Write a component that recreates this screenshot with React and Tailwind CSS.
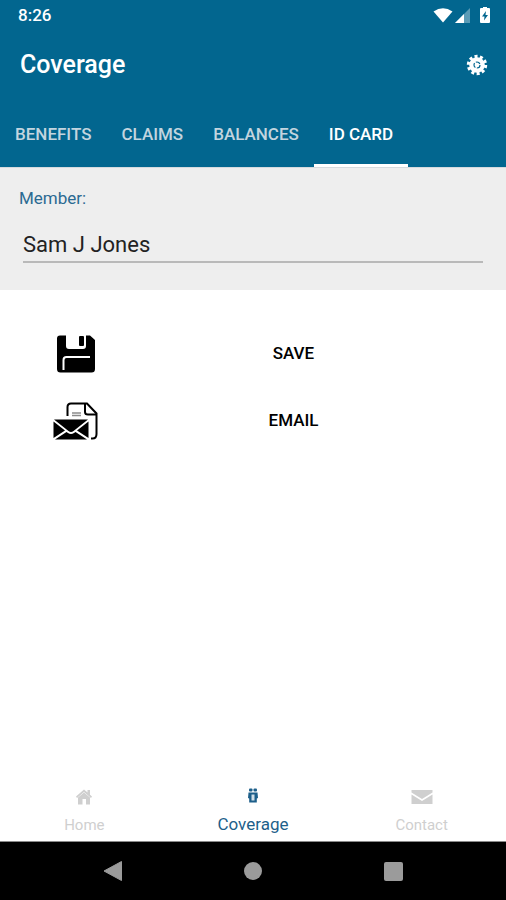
import React from 'react';

const tabs = ['BENEFITS', 'CLAIMS', 'BALANCES', 'ID CARD'];

const StatusIcons = () => (
  <svg className="w-[58px] h-5" viewBox="0 0 58 20" fill="white" aria-hidden="true">
    {/* Wifi */}
    <path d="M0.500 5.500 Q10 -1 19.500 5.500 L10 16.500 Z" />
    {/* Signal */}
    <path d="M37 2 V17 H22 Z" opacity="0.35" />
    <path d="M31 8 V17 H22 Z" />
    {/* Battery */}
    <path d="M48 2 H50 V1 H54 V2 H56 Q57 2 57 3 V16 Q57 17 56 17 H48 Q47 17 47 16 V3 Q47 2 48 2 Z" />
    <path d="M53 5 L49 10.500 H51.500 L51 14.500 L55 9 H52.500 Z" fill="#02668f" />
  </svg>
);

const GearIcon = () => (
  <svg className="size-[22px]" viewBox="0 0 22 22" aria-hidden="true">
    <circle cx="11" cy="11" r="8.500" fill="none" stroke="white" strokeWidth="3.400" strokeDasharray="2.940 2.400" />
    <circle cx="11" cy="11" r="7.800" fill="white" />
    <circle cx="11" cy="11" r="3" fill="none" stroke="#02668f" strokeWidth="1.200" strokeDasharray="4.800 1.480" />
  </svg>
);

const SaveIcon = () => (
  <svg className="w-[38px] h-[38px]" viewBox="0 0 38 38" aria-hidden="true">
    <path d="M3 0.500 H9 V11 Q9 14 12 14 H26 Q29 14 29 11 V0.500 H33 L38 5 V34 Q38 37.500 34.500 37.500 H3.500 Q0 37.500 0 34 V3.500 Q0 0.500 3 0.500 Z" />
    <rect x="22" y="1" width="5" height="10" rx="1" />
    <path d="M6.500 35 V25 Q6.500 22 9.500 22 H33" fill="none" stroke="white" strokeWidth="2" />
  </svg>
);

const EmailIcon = () => (
  <svg className="w-[46px] h-[38px]" viewBox="0 0 46 38" aria-hidden="true">
    <path d="M14.500 14 V5 Q14.500 1.500 18 1.500 H34 L43.500 11.500 V32 Q43.500 36.500 39.500 36.500 H38" fill="none" stroke="black" strokeWidth="2" />
    <path d="M32 2 V10 Q32 12.500 35 12.500 H43" fill="none" stroke="black" strokeWidth="2" />
    <path d="M19 11 H28 M19 13.500 H28" stroke="#8c8c8c" strokeWidth="1.500" />
    <path d="M1 17.500 H35 L20.500 29 Q18 31 15.500 29 Z" />
    <path d="M0.500 19.500 L12 28.500 L0.500 36 Z M35.500 19.500 L24 28.500 L35.500 36 Z" />
    <path d="M2 37.500 L13.500 30 L15 31 Q18 33 21 31 L22.500 30 L34 37.500 Z" />
  </svg>
);

const HomeIcon = () => (
  <svg className="w-4 h-4" viewBox="0 0 16 16" fill="currentColor" aria-hidden="true">
    <path d="M0 7.500 L8 0.500 L11.500 3.500 V1 H14 V5.800 L16 7.500 L15 9 L8 3 L1 9 Z" />
    <path d="M2 8.500 L8 3.500 L14 8.500 V15.500 H10 V10 H6.500 V15.500 H2 Z" />
  </svg>
);

const CoverageIcon = () => (
  <svg className="w-4 h-4" viewBox="0 0 16 16" fill="currentColor" aria-hidden="true">
    <rect x="4" y="0.500" width="3.500" height="3" rx="1" />
    <rect x="8.500" y="0.500" width="3.500" height="3" rx="1" />
    <path d="M3.500 4.500 H12.500 L13 10 L11.800 10.500 V14.500 H4.200 V10.500 L3 10 Z" />
    <path d="M6.500 6.500 H9.500 V12.500 H6.500 Z" fill="white" opacity="0.800" />
  </svg>
);

const MailIcon = () => (
  <svg className="w-[22px] h-4" viewBox="0 0 22 16" fill="currentColor" aria-hidden="true">
    <path d="M0.500 1 H21.500 V3.500 L11 10 L0.500 3.500 Z" />
    <path d="M0.500 5.500 L11 12 L21.500 5.500 V15 H0.500 Z" />
  </svg>
);

const ActionRow = ({ icon, label }) => (
  <button type="button" className="flex items-center w-full h-[67px] text-[17px] font-medium text-black">
    <span className="w-[30%] flex justify-center">{icon}</span>
    <span className="w-[56%] text-center">{label}</span>
  </button>
);

const App = () => {
  return (
    <div className="min-h-screen flex flex-col bg-white font-[Roboto,sans-serif]">
      <header className="bg-[#02668f] text-white">
        {/* Status bar */}
        <div className="flex items-center justify-between h-8 pl-[18px] pr-[15px]">
          <span className="text-[17px] font-medium">8:26</span>
          <StatusIcons />
        </div>

        {/* Title bar */}
        <div className="flex items-center justify-between h-[66px] pl-5 pr-[18px]">
          <h1 className="text-[25px] font-medium">Coverage</h1>
          <button type="button" aria-label="Settings">
            <GearIcon />
          </button>
        </div>

        {/* Tabs */}
        <nav className="flex h-[69px]" role="tablist">
          {tabs.map((tab) => (
            <button
              key={tab}
              type="button"
              role="tab"
              aria-selected={tab === 'ID CARD'}
              className={`px-[15px] pt-2 border-b-3 text-[17px] font-medium ${
                tab === 'ID CARD' ? 'border-white text-white' : 'border-transparent text-[#c3d5df]'
              }`}
            >
              {tab}
            </button>
          ))}
        </nav>
      </header>

      {/* Member */}
      <section className="h-[123px] px-[19px] pt-[18px] bg-[#eeeeee] border-t border-[#d5dade]">
        <label htmlFor="member" className="block h-6 leading-6 text-[17px] text-[#2b6a92]">
          Member:
        </label>
        <div className="px-1 pt-[17px]">
          <input
            id="member"
            type="text"
            defaultValue="Sam J Jones"
            className="block w-full h-9 border-b-2 border-[#b9b9b9] bg-transparent text-[22px] text-[#222222] outline-none"
          />
        </div>
      </section>

      {/* Card actions */}
      <main className="flex-1 pt-[30px]">
        <ActionRow icon={<SaveIcon />} label="SAVE" />
        <ActionRow icon={<EmailIcon />} label="EMAIL" />
      </main>

      {/* Bottom navigation */}
      <nav className="grid grid-cols-3 h-[66px] border-b border-[#8a8a8a] text-center text-[#cfcfcf]">
        <a href="#home" className="flex flex-col items-center pt-[13px] gap-[10px]">
          <HomeIcon />
          <span className="text-[15px] leading-5">Home</span>
        </a>
        <a href="#coverage" className="flex flex-col items-center pt-3 gap-2 text-[#1d5f8a]">
          <CoverageIcon />
          <span className="text-[17px] leading-6">Coverage</span>
        </a>
        <a href="#contact" className="flex flex-col items-center pt-[13px] gap-[10px]">
          <MailIcon />
          <span className="text-[15px] leading-5">Contact</span>
        </a>
      </nav>

      {/* System buttons */}
      <div className="flex items-center justify-center h-[58px] bg-black">
        <button type="button" aria-label="Back" className="w-[140px] flex justify-center">
          <svg className="size-5" viewBox="0 0 20 20" aria-hidden="true">
            <path d="M1 10 L18.500 0.500 V19.500 Z" fill="#9b9b9b" stroke="#9b9b9b" strokeLinejoin="round" />
          </svg>
        </button>
        <button type="button" aria-label="Home" className="w-[140px] flex justify-center">
          <span className="size-[18px] rounded-full bg-[#9b9b9b]"></span>
        </button>
        <button type="button" aria-label="Recent apps" className="w-[140px] flex justify-center">
          <span className="size-[19px] rounded-xs bg-[#9b9b9b]"></span>
        </button>
      </div>
    </div>
  );
};

export default App;
